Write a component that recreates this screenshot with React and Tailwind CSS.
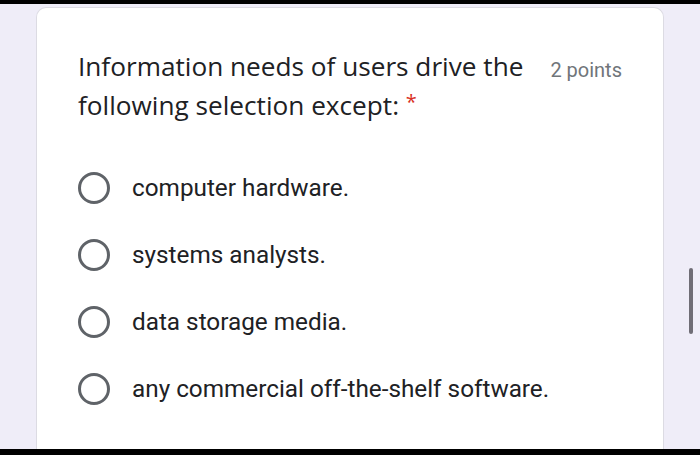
const options = [
  "computer hardware.",
  "systems analysts.",
  "data storage media.",
  "any commercial off-the-shelf software.",
];

export default function App() {
  return (
    <div className="w-[700px] h-[455px] bg-black flex flex-col overflow-hidden">
      <div className="h-[4px] shrink-0" />
      <div className="flex-1 bg-[#efedf8] flex overflow-hidden relative">
        <div className="ml-[36px] mt-[3px] w-[628px] bg-white rounded-t-[10px] border border-b-0 border-[#dcdbe3] flex flex-col">
          <div className="flex items-start pl-[41px] pr-[41px] pt-[39px]">
            <div
              className="flex-1 text-[26.2px] leading-[39px] text-[#202124]"
              style={{ fontFamily: "'Open Sans', 'Noto Sans', sans-serif" }}
            >
              Information needs of users drive the following selection except:{" "}
              <span className="text-[#d93025] text-[20px] leading-[20px] align-[6px]">*</span>
            </div>
            <div
              className="ml-[10px] pt-[8px] text-[20px] text-[#70757a] whitespace-nowrap"
              style={{ fontFamily: "Roboto, sans-serif" }}
            >
              2 points
            </div>
          </div>
          <div className="flex flex-col pl-[41px] pt-[48px] gap-[37px]">
            {options.map((o) => (
              <div key={o} className="flex items-center h-[30px]">
                <div className="w-[32px] h-[32px] rounded-full border-[3px] border-[#5f6368] shrink-0" />
                <div
                  className="ml-[22px] text-[24.3px] text-[#202124]"
                  style={{ fontFamily: "Roboto, sans-serif" }}
                >
                  {o}
                </div>
              </div>
            ))}
          </div>
        </div>
        <div className="absolute left-[689px] top-[264px] w-[4px] h-[66px] rounded-full bg-[#6f6d76]" />
      </div>
      <div className="h-[6px] shrink-0" />
    </div>
  );
}
